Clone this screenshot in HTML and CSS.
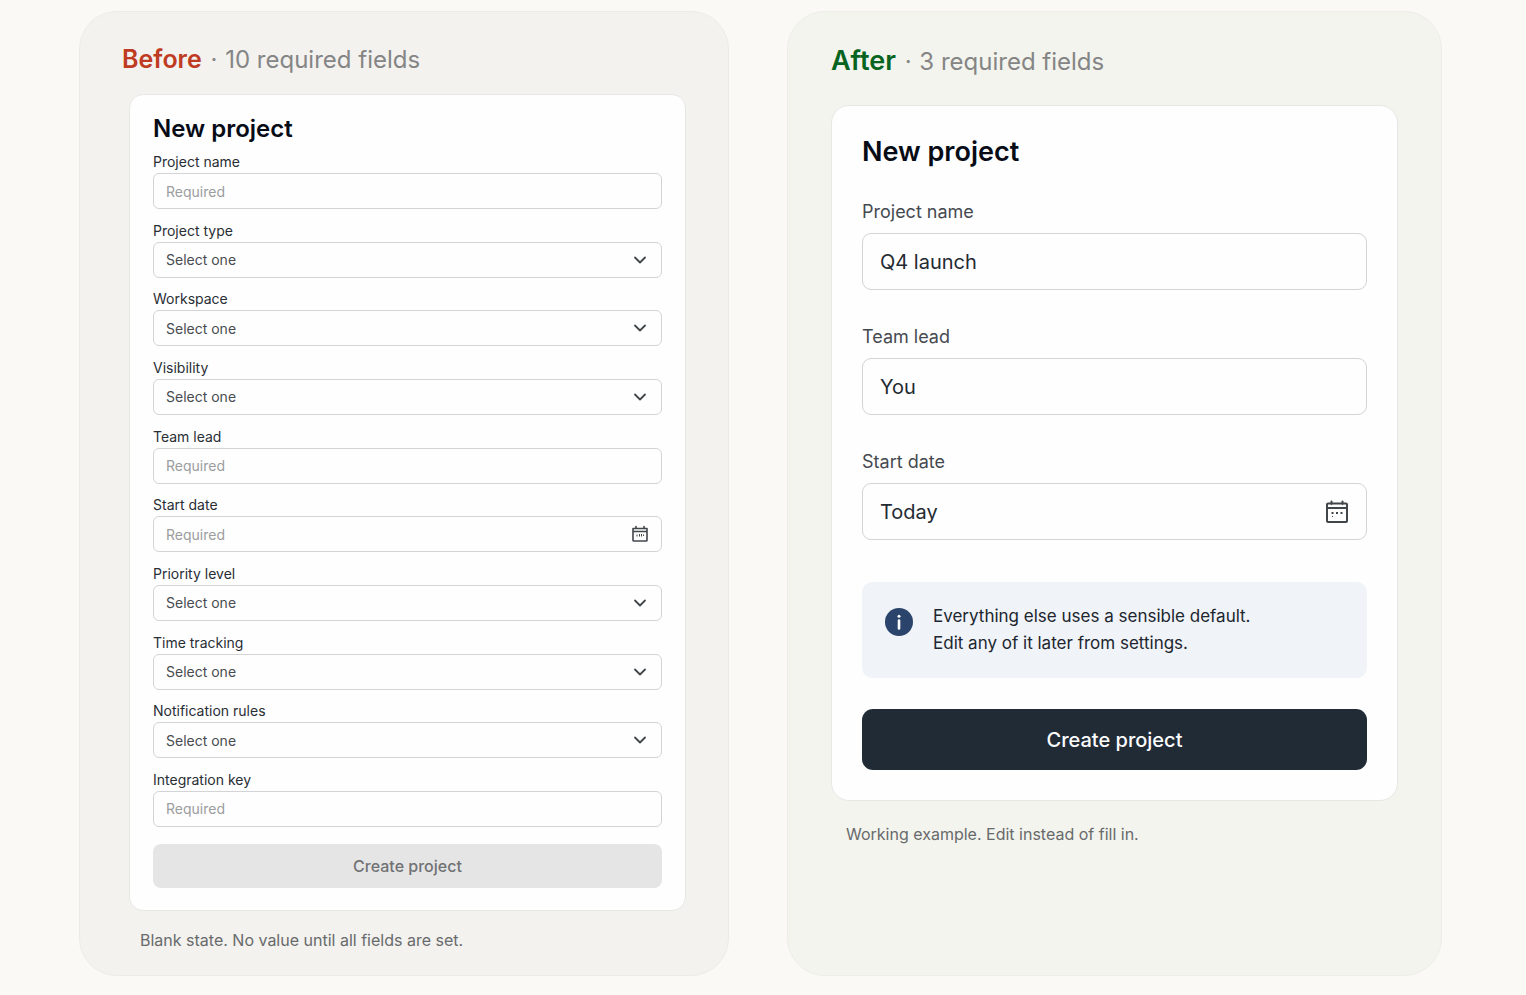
FILE: index.html
```html
<!DOCTYPE html>
<html lang="en">
<head>
<meta charset="utf-8">
<meta name="viewport" content="width=device-width, initial-scale=1">
<title>New project: before and after</title>
<link rel="stylesheet" href="styles.css">
</head>
<body>
<svg class="sprite" aria-hidden="true">
  <symbol id="chevron" viewBox="0 0 14 14"><path d="M2 4.5 7 9.5 12 4.5" fill="none" stroke="currentColor" stroke-width="1.8" stroke-linecap="round" stroke-linejoin="round"/></symbol>
  <symbol id="calendar-small" viewBox="0 0 18 18"><path d="M2 3.500H16V15.200Q16 16 15.200 16H2.800Q2 16 2 15.200ZM2 6.500H16M5 1.500V3.500M13 1.500V3.500" fill="none" stroke="currentColor" stroke-width="1.600" stroke-linejoin="round" stroke-linecap="round"/><path d="M6 9.500V11.500M8.500 9V11.500M10.500 9V11.500M12.500 9.500V11" stroke="currentColor" stroke-width="1"/></symbol>
  <symbol id="calendar" viewBox="0 0 24 24"><path d="M2 4.500Q2 3.500 3 3.500H21Q22 3.500 22 4.500V21Q22 22 21 22H3Q2 22 2 21ZM2 8H22M6.500 1.500V4M17.500 1.500V4" fill="none" stroke="currentColor" stroke-width="2" stroke-linejoin="round" stroke-linecap="round"/><path d="M6.500 13H8.500M11 13H13M15.500 13H17.500" stroke="currentColor" stroke-width="2"/><path d="M7 16.500H8" stroke="currentColor" stroke-width="1"/></symbol>
</svg>
<main class="comparison">
  <section class="panel panel-before">
    <h1 class="panel-title"><strong>Before</strong> <span class="dot">·</span> 10 required fields</h1>
    <form class="card">
      <h2 class="card-title">New project</h2>
      <div class="fields">
        <div class="field"><label for="b-name">Project name</label><div class="control"><input id="b-name" type="text" placeholder="Required"></div></div>
        <div class="field"><label for="b-type">Project type</label><div class="control"><select id="b-type"><option>Select one</option></select><svg class="icon"><use href="#chevron"/></svg></div></div>
        <div class="field"><label for="b-space">Workspace</label><div class="control"><select id="b-space"><option>Select one</option></select><svg class="icon"><use href="#chevron"/></svg></div></div>
        <div class="field"><label for="b-vis">Visibility</label><div class="control"><select id="b-vis"><option>Select one</option></select><svg class="icon"><use href="#chevron"/></svg></div></div>
        <div class="field"><label for="b-lead">Team lead</label><div class="control"><input id="b-lead" type="text" placeholder="Required"></div></div>
        <div class="field"><label for="b-date">Start date</label><div class="control"><input id="b-date" type="text" placeholder="Required"><svg class="icon icon-calendar"><use href="#calendar-small"/></svg></div></div>
        <div class="field"><label for="b-prio">Priority level</label><div class="control"><select id="b-prio"><option>Select one</option></select><svg class="icon"><use href="#chevron"/></svg></div></div>
        <div class="field"><label for="b-time">Time tracking</label><div class="control"><select id="b-time"><option>Select one</option></select><svg class="icon"><use href="#chevron"/></svg></div></div>
        <div class="field"><label for="b-rules">Notification rules</label><div class="control"><select id="b-rules"><option>Select one</option></select><svg class="icon"><use href="#chevron"/></svg></div></div>
        <div class="field"><label for="b-key">Integration key</label><div class="control"><input id="b-key" type="text" placeholder="Required"></div></div>
      </div>
      <button class="submit" type="submit" disabled>Create project</button>
    </form>
    <p class="caption">Blank state. No value until all fields are set.</p>
  </section>
  <section class="panel panel-after">
    <h1 class="panel-title"><strong>After</strong> <span class="dot">·</span> 3 required fields</h1>
    <form class="card">
      <h2 class="card-title">New project</h2>
      <div class="fields">
        <div class="field"><label for="a-name">Project name</label><div class="control"><input id="a-name" type="text" value="Q4 launch"></div></div>
        <div class="field"><label for="a-lead">Team lead</label><div class="control"><input id="a-lead" type="text" value="You"></div></div>
        <div class="field"><label for="a-date">Start date</label><div class="control"><input id="a-date" type="text" value="Today"><svg class="icon icon-calendar"><use href="#calendar"/></svg></div></div>
      </div>
      <div class="notice">
        <svg class="notice-icon" viewBox="0 0 28 28" aria-hidden="true"><circle cx="14" cy="14" r="14" fill="#2a446b"/><circle cx="14" cy="8.200" r="1.500" fill="#fff"/><path d="M14 12.500V20.500" stroke="#fff" stroke-width="2.600" stroke-linecap="round"/></svg>
        <p>Everything else uses a sensible default.<br>Edit any of it later from settings.</p>
      </div>
      <button class="submit" type="submit">Create project</button>
    </form>
    <p class="caption">Working example. Edit instead of fill in.</p>
  </section>
</main>
</body>
</html>
```
FILE: styles.css
```css
* { box-sizing: border-box; }
body {
  margin: 0;
  background: #faf9f5;
  color: #20262d;
  font-family: Inter, "Liberation Sans", sans-serif;
}
h1, h2, p { margin: 0; }
.sprite { position: absolute; width: 0; height: 0; }

.comparison {
  display: grid;
  grid-template-columns: 650fr 655fr;
  gap: 58px;
  min-height: 100vh;
  padding: 11px 84px 19px 79px;
}
.panel {
  display: flex;
  flex-direction: column;
  min-width: 0;
  border: 1px solid #ecebe7;
  border-radius: 38px;
}
.panel-before { padding: 32px 42px 23px 42px; background: #f3f2ef; }
.panel-after { padding: 34px 43px 23px; background: #f3f4ee; border-color: #eceee7; }

.panel-title {
  font-size: 24px;
  font-weight: 400;
  line-height: 32px;
  color: #858585;
}
.panel-title strong { font-weight: 600; line-height: 1; }
.dot { margin: 0 1px 0 2px; }
.panel-before strong { font-size: 25px; color: #bf3b22; }
.panel-after strong { font-size: 27px; color: #076420; }

.card {
  display: flex;
  flex-direction: column;
  background: #fefefe;
  border: 1px solid #e7e8e6;
}
.card-title { color: #070c16; font-weight: 600; }
.fields { display: flex; flex-direction: column; }
.field { display: flex; flex-direction: column; }
.control { position: relative; display: flex; }
.control input, .control select {
  width: 100%;
  margin: 0;
  appearance: none;
  border: 1px solid #d2d4d6;
  background: #fefefe;
  font-family: inherit;
}
.icon {
  position: absolute;
  top: 0;
  bottom: 0;
  margin: auto;
  color: #41464b;
  pointer-events: none;
}
.submit { border: 0; font-family: inherit; }
.caption { font-size: 16px; line-height: 24px; color: #686a6b; }

.panel-before .card {
  flex: 1;
  margin: 18px 0 17px 7px;
  padding: 20px 23px 22px;
  border-radius: 14px;
}
.panel-before .card-title { margin-bottom: 8px; font-size: 24px; line-height: 28px; }
.panel-before .fields { flex: 1; justify-content: space-between; gap: 8px; margin-bottom: 17px; }
.panel-before label { font-size: 14px; line-height: 22px; color: #292e34; }
.panel-before .control input, .panel-before .control select {
  height: 36px;
  padding: 0 12px;
  border-radius: 6px;
  font-size: 14px;
  color: #484c50;
}
.panel-before input::placeholder { color: #9b9d9f; opacity: 1; }
.panel-before .icon { right: 15px; width: 14px; height: 14px; }
.panel-before .icon-calendar { right: 13px; width: 18px; height: 18px; }
.panel-before .submit {
  height: 44px;
  border-radius: 8px;
  background: #e5e5e5;
  color: #707274;
  font-size: 16px;
  font-weight: 500;
}
.panel-before .caption { margin-left: 18px; }

.panel-after .card { margin: 27px 0 21px; padding: 30px; border-radius: 18px; }
.panel-after .card-title { margin-bottom: 32px; font-size: 27px; line-height: 32px; }
.panel-after .fields { gap: 35px; margin-bottom: 42px; }
.panel-after .field { gap: 9px; }
.panel-after label { font-size: 18px; line-height: 24px; color: #454a50; }
.panel-after .control input {
  height: 57px;
  padding: 0 17px;
  border-radius: 9px;
  font-size: 20px;
  color: #242a31;
}
.panel-after .icon { right: 18px; width: 24px; height: 24px; }
.notice {
  display: flex;
  gap: 20px;
  margin-bottom: 31px;
  padding: 21px 23px;
  border-radius: 10px;
  background: #f0f3f7;
  color: #20262f;
  font-size: 17px;
  line-height: 27px;
}
.notice-icon { flex: none; width: 28px; height: 28px; margin-top: 5px; }
.panel-after .submit {
  height: 61px;
  border-radius: 11px;
  background: #212b36;
  color: #fbfcfd;
  font-size: 20px;
  font-weight: 500;
}
.panel-after .caption { margin-left: 15px; }
```
